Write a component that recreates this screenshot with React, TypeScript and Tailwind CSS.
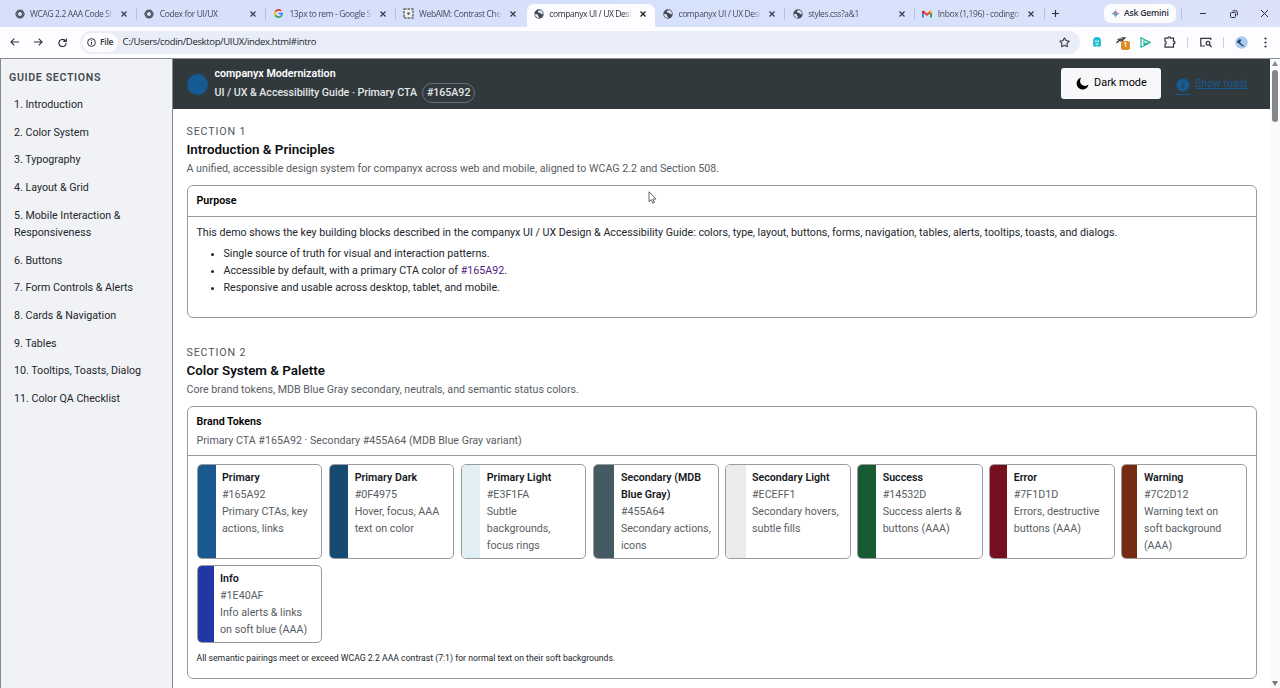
import React from "react";
import { Star } from "lucide-react";

const SANS = "font-['Roboto',sans-serif]";

function Knot() {
  return (
    <svg width="10" height="10" viewBox="0 0 24 24" fill="none" stroke="#4b555c" strokeWidth="2.6">
      <ellipse cx="12" cy="12" rx="10" ry="6" />
      <ellipse cx="12" cy="12" rx="10" ry="6" transform="rotate(60 12 12)" />
      <ellipse cx="12" cy="12" rx="10" ry="6" transform="rotate(120 12 12)" />
    </svg>
  );
}
function Google() {
  return (
    <svg width="9" height="9" viewBox="0 0 24 24" fill="none" strokeWidth="4.6">
      <path d="M19 5.2A9.6 9.6 0 0 0 3.7 7.4" stroke="#ea4335" />
      <path d="M3.7 7.4a9.6 9.6 0 0 0 0 9.2" stroke="#fbbc05" />
      <path d="M3.7 16.6A9.6 9.6 0 0 0 18.2 19.3" stroke="#34a853" />
      <path d="M12.2 12h9.4c0 3-1.2 5.6-3.4 7.3" stroke="#4285f4" />
    </svg>
  );
}
function Aim() {
  return (
    <svg width="11" height="11" viewBox="0 0 22 22" fill="none" stroke="#666b70">
      <rect x="2" y="2" width="18" height="18" fill="#eceded" strokeWidth="3" strokeDasharray="5 2" />
      <circle cx="11" cy="11" r="2.6" fill="#555b63" stroke="none" />
    </svg>
  );
}
function GlobeIcon() {
  return (
    <svg width="10" height="10" viewBox="0 0 20 20">
      <circle cx="10" cy="10" r="9.4" fill="#454c55" />
      <path d="M2 10c3 0 6 0 6 2.5S10 14 10 18c-4.500-.2-8-3.500-8-8zM8 3.500l5-1.200c3 1.200 5 3.900 5 7.200-1.500 2-3 1-4-.5S9 9 9 7 7 5.500 8 3.500z" fill="#dfe6f5" />
    </svg>
  );
}
function Mail() {
  return (
    <svg width="10" height="8" viewBox="0 0 20 16" fill="none">
      <path d="M2 15V3" stroke="#4285f4" strokeWidth="4" />
      <path d="M18 15V3" stroke="#34a853" strokeWidth="4" />
      <path d="M1.500 2.500 10 9.500l8.500-7" stroke="#ea4335" strokeWidth="4.200" />
      <path d="M18 6V2" stroke="#fbbc05" strokeWidth="4" />
      <path d="M2 6V2" stroke="#c5221f" strokeWidth="4" />
    </svg>
  );
}
function Cross({ dark }: { dark?: boolean }) {
  return (
    <svg width="6" height="6" viewBox="0 0 6 6" stroke={dark ? "#15181c" : "#353b46"} strokeWidth="1.200">
      <path d="M.5.500l5 5M5.500.500l-5 5" />
    </svg>
  );
}

const tabs = [
  { icon: <Knot />, title: "WCAG 2.2 AAA Code St", sep: true },
  { icon: <Knot />, title: "Codex for UI/UX", sep: true },
  { icon: <Google />, title: "13px to rem - Google S", sep: true },
  { icon: <Aim />, title: "WebAIM: Contrast Chec", sep: false },
  { icon: <GlobeIcon />, title: "companyx UI / UX Desi", active: true, sep: false },
  { icon: <GlobeIcon />, title: "companyx UI / UX Desi", sep: true },
  { icon: <GlobeIcon />, title: "styles.css?a&1", sep: true },
  { icon: <Mail />, title: "Inbox (1,196) - codingo", sep: true },
];

function TabStrip() {
  return (
    <div className="flex h-[27px] bg-linear-to-r from-[#d8dffb] via-[#d6e1fc] to-[#dbe2fa] pl-[7px]">
      {tabs.map((t, i) => (
        <div key={i} className="flex h-[27px] w-[129.700px] shrink-0 items-end">
          <div
            className={
              t.active
                ? "ml-[1.500px] flex h-[23px] w-[127.500px] items-center rounded-t-[7px] bg-[#fdfdff] pb-[4px] pl-[6px]"
                : "flex h-[23px] w-[129px] items-center pb-[4px] pl-[7px]"
            }
          >
            <span className="flex w-[11px] justify-center">{t.icon}</span>
            <span
              className={
                "ml-[5px] w-[83px] overflow-hidden whitespace-nowrap mask-r-from-90% mask-r-to-100% font-['Open_Sans',sans-serif] text-[8.500px] leading-[14px] tracking-[-0.380px] " +
                (t.active ? "text-[#2a2e35]" : "text-[#454b58]")
              }
            >
              {t.title}
            </span>
            <span className="ml-[7.500px]">
              <Cross dark={t.active} />
            </span>
          </div>
          {t.sep && <span className="mb-[7px] h-[12px] w-px bg-[#b5bfdc]" />}
        </div>
      ))}
      <div className="flex flex-1 items-center text-[#2b303a]">
        <svg className="ml-[7.500px]" width="7" height="7" viewBox="0 0 7 7" stroke="currentColor" strokeWidth="1.200">
          <path d="M3.500 0v7M0 3.500h7" />
        </svg>
        <div className="ml-[45px] flex h-[19px] w-[72px] items-center rounded-[7px] bg-[#fcfcff] pl-[7px]">
          <svg width="9" height="9" viewBox="0 0 18 18">
            <path d="M9 0Q10 8 18 9H9z" fill="#ea5b50" />
            <path d="M18 9Q10 10 9 18V9z" fill="#3979e8" />
            <path d="M9 18Q8 10 0 9h9z" fill="#3aa765" />
            <path d="M0 9Q8 8 9 0v9z" fill="#4779df" />
          </svg>
          <span className="ml-[4px] font-['Open_Sans',sans-serif] text-[8.600px] font-semibold tracking-[-0.200px] whitespace-nowrap">Ask Gemini</span>
        </div>
        <span className="ml-[5px] h-[11px] w-px bg-[#b5bfdc]" />
        <svg className="ml-[18px]" width="6" height="7" viewBox="0 0 6 7" stroke="currentColor"><path d="M0 3.500h6" /></svg>
        <svg className="ml-[24px]" width="8" height="8" viewBox="0 0 8 8" fill="none" stroke="currentColor">
          <rect x=".5" y="2.500" width="5" height="5" rx="1" />
          <path d="M2.500.8H6q1.300 0 1.300 1.300v3.400" />
        </svg>
        <svg className="ml-[23px]" width="7" height="7" viewBox="0 0 7 7" stroke="currentColor"><path d="M0 0l7 7M7 0L0 7" /></svg>
      </div>
    </div>
  );
}

function Toolbar() {
  return (
    <div className="flex h-[31px] items-center bg-[#fdfdff] pb-px pl-[10px] text-[#30343b]">
      <svg width="9" height="8" viewBox="0 0 9 8" fill="none" stroke="currentColor" strokeWidth="1.100"><path d="M9 4H1M4.300.6L.9 4l3.400 3.400" /></svg>
      <svg className="ml-[15px]" width="9" height="8" viewBox="0 0 9 8" fill="none" stroke="currentColor" strokeWidth="1.100"><path d="M0 4h8M4.700.6L8.100 4 4.700 7.400" /></svg>
      <svg className="ml-[15px]" width="9" height="9" viewBox="0 0 9 9" fill="none" stroke="currentColor" strokeWidth="1.200"><path d="M7.600 3.200A3.600 3.600 0 1 0 8.100 5M8.300.4v3H5.300" /></svg>
      <div className="ml-[13px] flex h-[23px] w-[1000px] items-center rounded-full bg-[#e9edf7] pl-[2px]">
        <div className="flex h-[19px] w-[36px] items-center rounded-full bg-[#fdfdff] pl-[5px]">
          <svg width="9" height="9" viewBox="0 0 9 9" fill="none" stroke="currentColor"><circle cx="4.500" cy="4.500" r="3.900" /><path d="M4.500 4v2.700M4.500 2.200v1" /></svg>
          <span className="ml-[4px] font-['Open_Sans',sans-serif] text-[8.400px] font-semibold tracking-[-0.200px]">File</span>
        </div>
        <span className="ml-[4.500px] flex-1 font-['Open_Sans',sans-serif] text-[9.500px] tracking-[-0.340px] text-[#24272d]">
          C:/Users/codin/Desktop/UIUX/index.html#intro
        </span>
        <Star className="mr-[10.500px]" size={11} strokeWidth={2.300} />
      </div>
      <svg className="ml-[13px]" width="8" height="10" viewBox="0 0 8 10"><path d="M0 8.500V4a4 4 0 0 1 8 0v4.500L6.500 10 4 9.200 1.500 10z" fill="#20bfd2" /><path d="M2.300 3.500h1.200v1.500H2.300zM4.600 3.500h1.200v1.500H4.600zM2.500 6.500h3v1h-3z" fill="#fff" /></svg>
      <div className="relative ml-[15px] h-[12px] w-[14px]">
        <svg width="11" height="9" viewBox="0 0 11 9" fill="none" stroke="#39342e" strokeWidth="1.200"><path d="M.5 7L3 4.500l2 .5L9.500 1.500M1.500 3.500l3-.5 3 2.500M5.500 1.800h3" /></svg>
        <span className="absolute top-[4.500px] left-[5px] flex h-[9px] w-[9px] items-center justify-center rounded-[2.500px] bg-[#db8c24] font-['Open_Sans',sans-serif] text-[7.500px] leading-none font-semibold text-white">1</span>
      </div>
      <svg className="ml-[9.500px]" width="11" height="11" viewBox="0 0 11 11" fill="none" stroke="#1cae9a" strokeWidth="1.200"><path d="M1 .8l9 4.700L1 10.200zM4 3.200v4.600L7.500 5.500" /></svg>
      <svg className="ml-[13.500px]" width="12" height="12" viewBox="0 0 12 12" fill="none" stroke="currentColor" strokeWidth="1.200"><path d="M1 2.200h3C3.800.5 6.700.5 6.500 2.200h3v3c1.900-.2 1.900 2.600 0 2.400v3.600H1V8c1.800 0 1.800-2.500 0-2.500z" /></svg>
      <span className="ml-[11px] h-[11px] w-px bg-[#cdd1dc]" />
      <svg className="ml-[11.500px]" width="12" height="11" viewBox="0 0 12 11" fill="none" stroke="currentColor" strokeWidth="1.200"><path d="M5 9H.8V1.300h10V3" /><circle cx="8" cy="6.200" r="1.900" /><path d="M9.400 7.600l2.200 2.400" /></svg>
      <span className="ml-[11px] h-[11px] w-px bg-[#cdd1dc]" />
      <svg className="ml-[11px]" width="13" height="13" viewBox="0 0 13 13"><circle cx="6.500" cy="6.500" r="6.200" fill="#a9c9ed" /><path d="M1.500 6l3-3 2 1-1.500 2L6.500 8 10 10.500l-3-.5L4 7.500z" fill="#26466d" /></svg>
      <svg className="ml-[16px]" width="3" height="11" viewBox="0 0 3 11" fill="currentColor"><circle cx="1.500" cy="1.500" r="1.100" /><circle cx="1.500" cy="5.500" r="1.100" /><circle cx="1.500" cy="9.500" r="1.100" /></svg>
    </div>
  );
}

const nav = [
  "1. Introduction", "2. Color System", "3. Typography", "4. Layout & Grid", "5. Mobile Interaction & Responsiveness",
  "6. Buttons", "7. Form Controls & Alerts", "8. Cards & Navigation", "9. Tables", "10. Tooltips, Toasts, Dialog", "11. Color QA Checklist",
];

const swatches = [
  { name: "Primary", hex: "#165A92", text: "Primary CTAs, key actions, links", bar: "w-[18px] bg-[#1b5a90]" },
  { name: "Primary Dark", hex: "#0F4975", text: "Hover, focus, AAA text on color", bar: "w-[18.500px] bg-[#174a70]" },
  { name: "Primary Light", hex: "#E3F1FA", text: "Subtle backgrounds, focus rings", bar: "w-[18.500px] bg-[#e2eff5]", narrow: true },
  { name: "Secondary (MDB Blue Gray)", hex: "#455A64", text: "Secondary actions, icons", bar: "w-[20.500px] bg-[#465a64]" },
  { name: "Secondary Light", hex: "#ECEFF1", text: "Secondary hovers, subtle fills", bar: "w-[19.500px] bg-[#ebebeb]" },
  { name: "Success", hex: "#14532D", text: "Success alerts & buttons (AAA)", bar: "w-[18px] bg-[#185a32]" },
  { name: "Error", hex: "#7F1D1D", text: "Errors, destructive buttons (AAA)", bar: "w-[17px] bg-[#75101f]" },
  { name: "Warning", hex: "#7C2D12", text: "Warning text on soft background (AAA)", bar: "w-[15px] bg-[#752a12]", narrow: true },
  { name: "Info", hex: "#1E40AF", text: "Info alerts & links on soft blue (AAA)", bar: "w-[16px] bg-[#2236a5]" },
];

function SectionHead({ n, title, sub }: { n: string; title: string; sub: string }) {
  return (
    <div>
      <p className="text-[10.700px] leading-[17px] tracking-[0.850px] text-[#52565c]">{n}</p>
      <h2 className="text-[13.380px] leading-[19px] font-semibold text-[#0c0e12]">{title}</h2>
      <p className="mt-px leading-[17px] text-[#585d63]">{sub}</p>
    </div>
  );
}

export default function App() {
  return (
    <div className={"relative flex h-[688px] w-[1280px] flex-col overflow-hidden bg-white text-[10.680px] text-[#22262c] " + SANS}>
      <TabStrip />
      <Toolbar />
      <div className="flex min-h-0 flex-1 border-t border-[#8b8d92]">
        <aside className="w-[173px] shrink-0 border-x border-[#85888d] bg-[#f1f2f5] pt-[10px] pl-[8px]">
          <h2 className="leading-[17px] font-semibold tracking-[0.620px] text-[#454a52]">GUIDE SECTIONS</h2>
          <nav className="mt-[10px] flex w-[140px] flex-col gap-[10.480px] pl-[5px] leading-[17.200px]">
            {nav.map((n) => (
              <a key={n} className={n.startsWith("10") ? "whitespace-nowrap" : ""}>{n}</a>
            ))}
          </nav>
        </aside>
        <main className="flex min-w-0 flex-1 flex-col">
          <header className="flex h-[50px] shrink-0 items-center bg-[#31393c] pl-[13.500px]">
            <span className="h-[21px] w-[21px] rounded-full bg-[#165a92]" />
            <div className="ml-[7px] flex-1">
              <p className="leading-[17px] font-semibold text-white">companyx Modernization</p>
              <p className="mt-px flex items-center leading-[20px] font-medium tracking-[-0.050px] text-[#e3e7ea]">
                UI / UX &amp; Accessibility Guide · Primary CTA
                <span className="ml-[5px] flex h-[20px] items-center rounded-full border border-[#67737b] px-[4px]">#165A92</span>
              </p>
            </div>
            <button className="mb-px flex h-[31px] w-[100px] items-center rounded-[3px] bg-[#f7f8fa] pl-[15px] text-black">
              <svg width="13" height="13" viewBox="0 0 13 13"><path d="M5.500.5A6 6 0 1 0 12.500 7.500 4.500 4.500 0 0 1 5.500.5z" /></svg>
              <span className="ml-[5px] text-[10.900px]">Dark mode</span>
            </button>
            <a className="mr-[22.500px] ml-[14px] flex items-center text-[#165a92]">
              <svg className="mt-[3px]" width="16" height="18" viewBox="0 0 16 18"><circle cx="8" cy="8" r="6.500" fill="#165a92" /><path d="M8 7v4M8 4.500v1" stroke="#30424d" strokeWidth="1.500" /><path d="M0 17.500h16" stroke="#165a92" /></svg>
              <span className="ml-[4px] text-[10.500px] underline">Show toast</span>
            </a>
          </header>
          <div className="flex flex-col pt-[14px] pr-[13px] pl-[13.500px]">
            <SectionHead n="SECTION 1" title="Introduction & Principles" sub="A unified, accessible design system for companyx across web and mobile, aligned to WCAG 2.2 and Section 508." />
            <section className="mt-[8px] h-[133px] rounded-[6px] border border-[#999b9f]">
              <h3 className="flex h-[31px] items-center border-b border-[#999b9f] pl-[9px] font-semibold text-black">Purpose</h3>
              <p className="mt-[7px] pl-[9px] leading-[17px]">
                This demo shows the key building blocks described in the companyx UI / UX Design &amp; Accessibility Guide: colors, type, layout, buttons, forms, navigation, tables, alerts, tooltips, toasts, and dialogs.
              </p>
              <ul className="mt-[4px] list-disc pl-[36px] leading-[17.100px]">
                <li>Single source of truth for visual and interaction patterns.</li>
                <li>Accessible by default, with a primary CTA color of <span className="text-[#55217f]">#165A92</span>.</li>
                <li>Responsive and usable across desktop, tablet, and mobile.</li>
              </ul>
            </section>
            <div className="mt-[26px]">
              <SectionHead n="SECTION 2" title="Color System & Palette" sub="Core brand tokens, MDB Blue Gray secondary, neutrals, and semantic status colors." />
            </div>
            <section className="mt-[8px] h-[273px] rounded-[6px] border border-[#999b9f]">
              <div className="h-[49px] border-b border-[#999b9f] pt-[6px] pl-[9px]">
                <h3 className="leading-[18px] font-semibold text-black">Brand Tokens</h3>
                <p className="leading-[19px] text-[#585d63]">Primary CTA #165A92 · Secondary #455A64 (MDB Blue Gray variant)</p>
              </div>
              <div className="grid grid-cols-8 gap-x-[6.500px] gap-y-[6px] px-[9px] pt-[8px]">
                {swatches.map((s) => (
                  <div key={s.name} className="flex overflow-hidden rounded-[5px] border border-[#999b9f]">
                    <span className={"shrink-0 " + s.bar} />
                    <div className={"min-w-0 flex-1 pt-[4px] pb-[4px] pl-[6.500px] leading-[17.050px] text-[#585d63] " + (s.narrow ? "pr-[10px]" : "pr-[4.500px]")}>
                      <p className="font-semibold text-[#15181d]">{s.name}</p>
                      <p>{s.hex}</p>
                      <p>{s.text}</p>
                    </div>
                  </div>
                ))}
              </div>
              <p className="mt-[7.500px] pl-[9px] text-[8.690px] leading-[14px]">All semantic pairings meet or exceed WCAG 2.2 AAA contrast (7:1) for normal text on their soft backgrounds.</p>
            </section>
          </div>
        </main>
        <div className="flex w-[10px] shrink-0 flex-col items-center bg-[#fafafb] pt-[2px] pb-[2px]">
          <svg width="6" height="5" viewBox="0 0 6 5" fill="#85878b"><path d="M3 0l3 5H0z" /></svg>
          <span className="mt-[4px] h-[52px] w-[6px] rounded-full bg-[#85868a]" />
          <svg className="mt-auto" width="6" height="5" viewBox="0 0 6 5" fill="#75777b"><path d="M3 5l3-5H0z" /></svg>
        </div>
      </div>
      <svg className="absolute top-[191px] left-[648px]" width="9" height="13" viewBox="0 0 9 13" fill="#fff" stroke="#555" strokeWidth=".9"><path d="M1 .8v10l2.300-2.200 1.500 3.600 1.600-.7L4.900 8H8z" /></svg>
    </div>
  );
}
